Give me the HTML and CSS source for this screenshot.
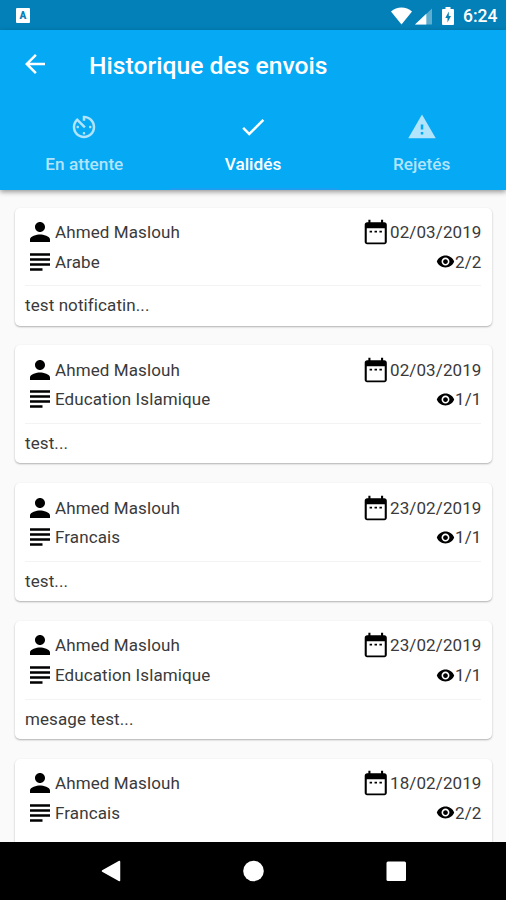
FILE: index.html
```
<!DOCTYPE html>
<html lang="fr">
<head>
<meta charset="utf-8">
<title>Historique des envois</title>
<link rel="stylesheet" href="styles.css">
</head>
<body>
<svg class="sprite" aria-hidden="true">
  <symbol id="person" viewBox="0 0 24 24"><path d="M12 12c2.21 0 4-1.79 4-4s-1.79-4-4-4-4 1.790-4 4 1.790 4 4 4zm0 2c-2.670 0-8 1.340-8 4v2h16v-2c0-2.660-5.330-4-8-4z"/></symbol>
  <symbol id="subject" viewBox="0 0 24 24"><path d="M14 17H4v2h10v-2zm6-8H4v2h16V9zM4 15h16v-2H4v2zM4 5v2h16V5H4z"/></symbol>
  <symbol id="date" viewBox="0 0 24 24"><path d="M9 11H7v1.500h2V11zm4 0h-2v1.500h2V11zm4 0h-2v1.500h2V11zm2-7h-1V2h-1.700v2H7.700V2H6v2H5c-1.110 0-1.990.9-1.990 2L3 20c0 1.100.89 2 2 2h14c1.100 0 2-.9 2-2V6c0-1.100-.9-2-2-2zm.300 16.500H4.700V9h14.600v11.500z"/></symbol>
  <symbol id="eye" viewBox="0 0 24 24"><path d="M12 4.500C7 4.500 2.730 7.610 1 12c1.730 4.390 6 7.500 11 7.500s9.270-3.110 11-7.500c-1.730-4.390-6-7.500-11-7.500zM12 17c-2.760 0-5-2.240-5-5s2.240-5 5-5 5 2.240 5 5-2.240 5-5 5zm0-8c-1.660 0-3 1.340-3 3s1.340 3 3 3 3-1.340 3-3-1.340-3-3-3z"/></symbol>
</svg>
<div class="screen">
  <div class="status">
    <span class="app-badge">A</span>
    <svg class="wifi" viewBox="0 0 22 18"><path d="M0 4.200C6-1.400 16-1.400 22 4.200L11 18z" fill="#fff"/></svg>
    <svg class="signal" viewBox="0 0 18 17"><path d="M18 0v17H0z" fill="#5eaed0"/><path d="M12 5.700V17H0z" fill="#fff"/></svg>
    <svg class="battery" viewBox="0 0 12 18"><path d="M3.500 0h5v2H11a1 1 0 0 1 1 1v14a1 1 0 0 1-1 1H1a1 1 0 0 1-1-1V3a1 1 0 0 1 1-1h2.500z" fill="#fff"/><path d="M6.800 4.500 3.300 11H5.500v4.500L9 9H6.800z" fill="#0780b5"/></svg>
    <span class="clock">6:24</span>
  </div>
  <header class="appbar">
    <div class="toolbar">
      <svg class="back" viewBox="0 0 24 24"><path d="M20 11H7.830l5.590-5.590L12 4l-8 8 8 8 1.410-1.410L7.830 13H20v-2z"/></svg>
      <h1>Historique des envois</h1>
    </div>
    <nav class="tabs">
      <div class="tab">
        <svg viewBox="0 0 24 24"><path d="M11 3v4h2V5.080c3.390.49 6 3.390 6 6.920 0 3.870-3.130 7-7 7s-7-3.130-7-7c0-1.680.59-3.220 1.580-4.420L12 13l1.410-1.410-6.800-6.800v.020C4.420 6.450 3 9.050 3 12c0 4.970 4.020 9 9 9 4.970 0 9-4.030 9-9s-4.030-9-9-9h-1zm7 9c0-.55-.45-1-1-1s-1 .45-1 1 .45 1 1 1 1-.45 1-1zM6 12c0 .55.45 1 1 1s1-.45 1-1-.45-1-1-1-1 .45-1 1zm5 5c0 .55.450 1 1 1s1-.45 1-1-.45-1-1-1-1 .45-1 1z"/></svg>
        <span>En attente</span>
      </div>
      <div class="tab active">
        <svg viewBox="0 0 24 24"><path d="M9 16.170L4.830 12l-1.420 1.410L9 19 21 7l-1.410-1.410z"/></svg>
        <span>Validés</span>
      </div>
      <div class="tab">
        <svg viewBox="0 0 24 24"><path d="M1 21h22L12 2 1 21zm12-3h-2v-2h2v2zm0-4h-2v-4h2v4z"/></svg>
        <span>Rejetés</span>
      </div>
    </nav>
  </header>
  <main class="list">
    <article class="card">
      <div class="row"><svg><use href="#person"/></svg><span>Ahmed Maslouh</span><svg class="end"><use href="#date"/></svg><span class="num">02/03/2019</span></div>
      <div class="row"><svg><use href="#subject"/></svg><span>Arabe</span><svg class="end eye"><use href="#eye"/></svg><span class="num">2/2</span></div>
      <p>test notificatin...</p>
    </article>
    <article class="card">
      <div class="row"><svg><use href="#person"/></svg><span>Ahmed Maslouh</span><svg class="end"><use href="#date"/></svg><span class="num">02/03/2019</span></div>
      <div class="row"><svg><use href="#subject"/></svg><span>Education Islamique</span><svg class="end eye"><use href="#eye"/></svg><span class="num">1/1</span></div>
      <p>test...</p>
    </article>
    <article class="card">
      <div class="row"><svg><use href="#person"/></svg><span>Ahmed Maslouh</span><svg class="end"><use href="#date"/></svg><span class="num">23/02/2019</span></div>
      <div class="row"><svg><use href="#subject"/></svg><span>Francais</span><svg class="end eye"><use href="#eye"/></svg><span class="num">1/1</span></div>
      <p>test...</p>
    </article>
    <article class="card">
      <div class="row"><svg><use href="#person"/></svg><span>Ahmed Maslouh</span><svg class="end"><use href="#date"/></svg><span class="num">23/02/2019</span></div>
      <div class="row"><svg><use href="#subject"/></svg><span>Education Islamique</span><svg class="end eye"><use href="#eye"/></svg><span class="num">1/1</span></div>
      <p>mesage test...</p>
    </article>
    <article class="card">
      <div class="row"><svg><use href="#person"/></svg><span>Ahmed Maslouh</span><svg class="end"><use href="#date"/></svg><span class="num">18/02/2019</span></div>
      <div class="row"><svg><use href="#subject"/></svg><span>Francais</span><svg class="end eye"><use href="#eye"/></svg><span class="num">2/2</span></div>
    </article>
  </main>
  <footer class="navbar">
    <svg viewBox="0 0 24 24"><path d="M20.500 2.500v19L3.500 12z" stroke="#fff" stroke-width="1.500" stroke-linejoin="round"/></svg>
    <svg viewBox="0 0 24 24"><circle cx="11.500" cy="12" r="10.300"/></svg>
    <svg viewBox="0 0 24 24"><rect x="2.500" y="2.500" width="19.500" height="19.500" rx="1.500"/></svg>
  </footer>
</div>
</body>
</html>
```
FILE: styles.css
```
* { box-sizing: border-box; }
body { margin: 0; font-family: Roboto, sans-serif; }
.sprite { display: none; }
.screen {
  width: 506px;
  height: 900px;
  display: flex;
  flex-direction: column;
  overflow: hidden;
  background: #fafafa;
}
.status {
  flex: none;
  height: 30px;
  display: flex;
  align-items: center;
  padding: 1px 9px 0 16px;
  background: #0380b8;
  color: #fff;
}
.app-badge {
  width: 14px;
  height: 15px;
  border-radius: 1px;
  background: #fff;
  color: #0780b5;
  font-size: 10px;
  font-weight: 900;
  line-height: 15px;
  text-align: center;
}
.wifi { width: 21px; height: 18px; margin-left: auto; }
.signal { width: 17px; height: 17px; margin: 1px 10px 0 3px; }
.battery { width: 12px; height: 18px; margin-right: 9px; }
.clock { width: 34px; font-size: 17.500px; font-weight: 500; line-height: 30px; }
.appbar {
  flex: none;
  z-index: 1;
  height: 160px;
  background: #05a9f4;
  color: #fff;
  box-shadow: 0 2px 5px rgba(0, 0, 0, .4);
}
.toolbar { height: 70px; display: flex; align-items: center; padding: 0 20px; }
.back { width: 30px; height: 30px; margin-top: -2px; fill: #fff; }
h1 { margin: 1px 0 0 39px; font-size: 24.700px; font-weight: 500; line-height: 30px; }
.tabs { display: flex; height: 90px; }
.tab {
  flex: 1;
  display: flex;
  flex-direction: column;
  align-items: center;
  padding-top: 12px;
  color: #b2e4fc;
  font-size: 17.200px;
  font-weight: 500;
  line-height: 22px;
  border-bottom: 2px solid transparent;
}
.tab svg { width: 30px; height: 30px; margin-bottom: 11px; fill: currentColor; }
.tab.active { color: #fff; border-color: #1c9ff2; }
.list {
  flex: 1;
  min-height: 0;
  overflow: hidden;
  padding: 17.600px 14px 0 15px;
  display: flex;
  flex-direction: column;
  gap: 19.800px;
}
.card {
  flex: none;
  height: 118px;
  padding: 9.700px 11px 0 10px;
  background: #fff;
  border-radius: 5px;
  box-shadow: 0 1px 2px rgba(0, 0, 0, .3);
  color: #3a3a3a;
  font-size: 17px;
  letter-spacing: .1px;
}
.row { display: flex; align-items: center; height: 29.600px; white-space: nowrap; }
.row svg { flex: none; width: 30px; height: 30px; fill: #000; }
.row .end { width: 29.500px; margin-left: auto; }
.row .eye { width: 19px; height: 19px; }
.num { margin-right: -.5px; }
.card p {
  margin: 9px 0 0;
  border-top: 1px solid #f3f3f3;
  line-height: 39px;
}
.navbar {
  flex: none;
  height: 58px;
  display: flex;
  align-items: center;
  justify-content: space-between;
  padding: 0 98px 0 99px;
  background: #000;
}
.navbar svg { width: 24px; height: 24px; fill: #fff; }
```
